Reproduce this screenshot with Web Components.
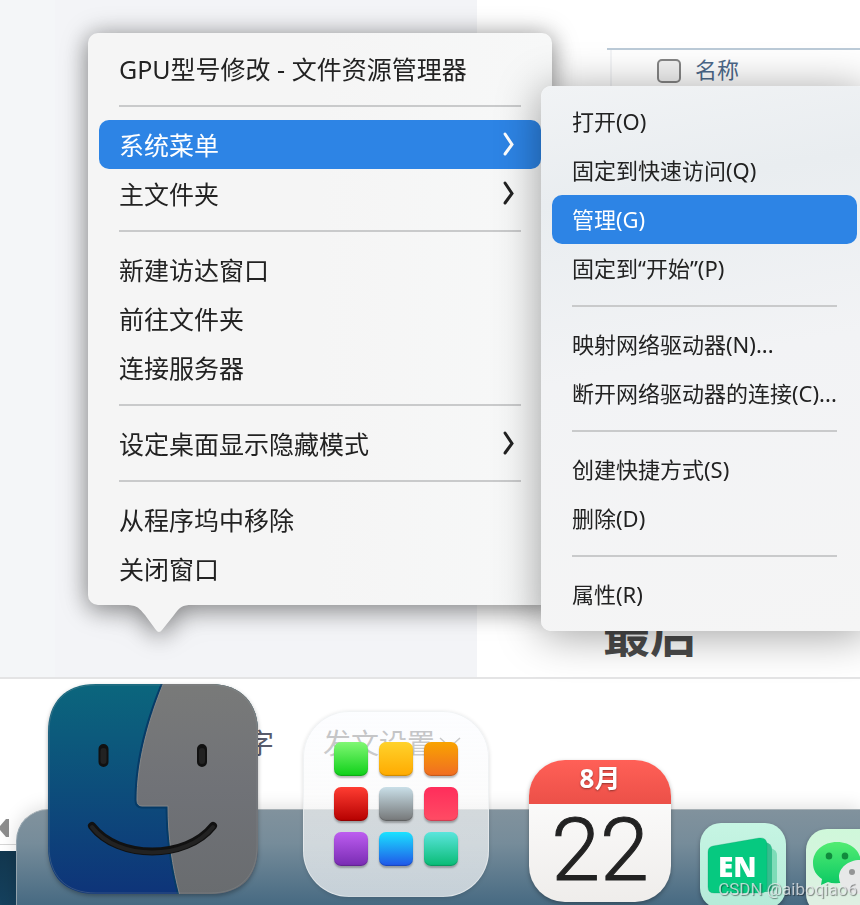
<!DOCTYPE html>
<html lang="zh-CN">
<head>
<meta charset="utf-8">
<title>程序坞菜单</title>
<style>
html,body{margin:0;height:100%;overflow:hidden;background:#fff}
body{font-family:"Noto Sans","Noto Sans CJK SC",sans-serif;color:#222}
</style>
</head>
<body>
<desk-top></desk-top>
<script>
function define(name, html, setup){
  customElements.define(name, class extends HTMLElement{
    connectedCallback(){
      if(this.shadowRoot) return;
      const root=this.attachShadow({mode:'open'});
      const t=document.createElement('template');
      t.innerHTML=html;
      root.append(t.content.cloneNode(true));
      if(setup) setup(this,root);
    }
  });
}

define('menu-row', `
<style>
:host{display:block}
button{all:unset;box-sizing:border-box;display:flex;align-items:center;justify-content:space-between;width:100%;height:49px;padding:0 20px var(--row-bottom,0px);border-radius:10px;white-space:nowrap;cursor:default}
:host([active]) button{background:#2d84e5;color:#fff}
svg{display:none;width:26px;height:26px;margin-bottom:2px}
:host([more]) svg{display:block}
</style>
<button type="button" role="menuitem"><span><slot></slot></span>
<svg viewBox="0 0 26 26" aria-hidden="true"><path d="M10 3L17 13.500L10 23" fill="none" stroke="currentColor" stroke-width="3" stroke-linecap="round"/></svg></button>`);

define('menu-line', `
<style>:host{display:block;height:2px;margin:12px 20px 13px;background:#c9cacb}</style>`);

define('pop-menu', `
<style>
:host{display:block;position:relative;box-sizing:border-box;padding:11px 11px 12px;border-radius:10px;background:var(--menu-bg,#f5f5f5);font-size:var(--menu-size,25px);line-height:32px;color:#222}
svg{display:none;position:absolute;top:100%;left:36px;width:68px;height:28px}
:host([tail]) svg{display:block}
</style>
<div role="menu"><slot></slot></div>
<svg viewBox="0 0 68 28" aria-hidden="true"><path d="M0 0C13 0 14 2 21 10L32 25Q35 29 38 25L50 10C56 2 58 0 68 0Z" fill="#f5f5f5"/></svg>`);

define('file-header', `
<style>
:host{display:block;border-top:2px solid #bccbd8;margin-left:130px}
label{display:flex;align-items:center;gap:14px;height:41px;margin-left:3px;padding-left:45px;border-left:2px solid #f3f4f6;font-size:22px;line-height:28px;color:#4c6889}
input{appearance:none;box-sizing:border-box;width:24px;height:24px;margin:0;border:2px solid #858585;border-radius:5px;background:#f2f2f2}
span{padding-bottom:4px}
</style>
<label><input type="checkbox"><span>名称</span></label>`);

define('editor-bar', `
<style>
:host{display:flex;flex-direction:column;border-top:2px solid #e4e4e5;box-sizing:border-box;background:#fff}
.tools{display:flex;align-items:center;gap:49px;height:125px;padding-left:246px;font-size:28px;color:#585b6b}
button{all:unset;display:flex;align-items:center;gap:4px;color:#989898}
.scroll{display:flex;align-items:center;flex:1;padding-top:8px;border-bottom:1px solid #d6d6d6;margin-bottom:6px}
svg{display:block}
</style>
<div class="tools"><span>字</span><button type="button">发文设置<svg width="22" height="14" viewBox="0 0 22 14"><path d="M1 3L11 12L21 3" fill="none" stroke="currentColor" stroke-width="1.500"/></svg></button></div>
<div class="scroll"><svg width="10" height="18" viewBox="0 0 10 18" aria-hidden="true"><path d="M9 0V18H6L0 11V7L6 0Z" fill="#8d8d8d"/></svg></div>`);

define('dock-icon', `
<style>
:host{display:block;flex:none;position:relative;width:var(--size);height:var(--size);margin-bottom:var(--lift,0px);margin-right:var(--gap,20px)}
:host([solid]){filter:drop-shadow(0 2px 2px rgba(0,0,0,.3))}
::slotted(svg){display:block;width:100%;height:100%}
</style><slot></slot>`);

define('launch-pad', `
<style>
:host{display:grid;box-sizing:border-box;width:100%;height:100%;grid-template-columns:repeat(3,34px);grid-auto-rows:34px;gap:11px;padding:30px;border-radius:46px;border:1px solid rgba(235,238,240,.7);background:linear-gradient(rgba(248,250,255,.4),rgba(250,250,250,.68) 52%,rgba(255,255,255,.68));box-shadow:0 1px 4px rgba(0,0,0,.14)}
i{border-radius:7px;background:linear-gradient(var(--a),var(--b));box-shadow:0 2px 2px rgba(0,0,0,.28),inset 0 -1px 1px rgba(0,0,0,.2)}
</style>`, (el,root)=>{
  [['#80f774','#0ed018'],['#ffd22c','#ffaa00'],['#f9a300','#f06d23'],
   ['#ff3d32','#b50000'],['#c9dfe8','#747677'],['#ff2d5b','#ff4c64'],
   ['#bd5df0','#782bb2'],['#1be2ff','#2055e8'],['#5be5dd','#08bb74']].forEach(([a,b])=>{
    const i=document.createElement('i');
    i.style.setProperty('--a',a); i.style.setProperty('--b',b);
    root.append(i);
  });
});

define('date-tile', `
<style>
:host{display:flex;flex-direction:column;width:100%;height:100%;border-radius:36px;overflow:hidden;background:linear-gradient(#fff,#efedeb);text-align:center}
header{height:44px;line-height:36px;background:linear-gradient(#ff6057,#ec5048);color:#fff;font-size:26px;font-weight:700;text-shadow:0 1px 2px rgba(0,0,0,.4)}
div{flex:1;line-height:92px;font-family:Roboto,"Liberation Sans",sans-serif;font-weight:300;font-size:88px;color:#222;-webkit-text-stroke:1px #222}
</style><header>8月</header><div>22</div>`);

define('dock-bar', `
<style>
:host{display:block}
.shelf{position:absolute;left:16px;right:0;bottom:0;height:96px;box-sizing:border-box;border-top:1px solid #a7b0b5;border-left:1px solid #93a3ad;border-radius:32px 0 0 0;background:linear-gradient(#81929d,#768c9a 35%,#476a82);box-shadow:0 -2px 18px rgba(0,0,0,.13)}
.icons{position:absolute;left:48px;bottom:-10px;display:flex;align-items:flex-end}
.mark{position:absolute;right:3px;bottom:4px;font:17px/24px Roboto,"Liberation Sans",sans-serif;color:rgba(235,238,240,.75);text-shadow:1px 1px 1px rgba(0,0,0,.45)}
</style>
<div class="shelf"></div>
<div class="icons">
<dock-icon solid style="--size:210px;--lift:21px;--gap:45px"><svg viewBox="0 0 210 210" role="img" aria-label="访达">
<defs><linearGradient id="b" x2="0" y2="1"><stop stop-color="#0b667d"/><stop offset=".25" stop-color="#0c5a7c"/><stop offset="1" stop-color="#0e3479"/></linearGradient>
<linearGradient id="g" x2="0" y2="1"><stop stop-color="#797a79"/><stop offset=".5" stop-color="#707277"/><stop offset="1" stop-color="#696c6f"/></linearGradient>
<clipPath id="c"><path id="s" d="M48 0H162C194 0 210 20 210 48V162C210 193 193 210 162 210H48C17 210 0 193 0 162V48C0 18 17 0 48 0Z"/></clipPath></defs>
<g clip-path="url(#c)"><path fill="url(#b)" d="M0 0H210V210H0Z"/>
<path d="M115 -2C98 39 88 80 88 116Q88 123 94 123H119C119 153 123 182 131 212H214V-2Z" fill="url(#g)" stroke="#063b67" stroke-width="3"/>
<path d="M116 -2C99 39 89 80 89 116Q89 122 94 122H120C120 153 124 182 132 212H214V-2Z" fill="url(#g)" stroke="#858687"/></g>
<path d="M48 1H162C193 1 209 20 209 48V162C209 192 192 209 162 209H48C18 209 1 192 1 162V48C1 18 18 1 48 1Z" fill="none" stroke="#8b9499" stroke-opacity=".3"/>
<g fill="none" stroke="#111" stroke-linecap="round"><path stroke-width="10" d="M55.500 65V78M154 65V78"/><path stroke-width="8" d="M44 142C70 176 138 176 165 142"/></g>
<g fill="none" stroke="#222" stroke-linecap="round"><path stroke-width="6" d="M55.500 67V77M154 67V77"/><path stroke-width="4" d="M44 143C70 177 138 177 165 143"/></g></svg></dock-icon>
<dock-icon style="--size:186px;--lift:18px;--gap:40px"><launch-pad></launch-pad></dock-icon>
<dock-icon solid style="--size:142px;--lift:13px;--gap:29px"><date-tile></date-tile></dock-icon>
<dock-icon solid style="--size:86px;--lift:6px"><svg viewBox="0 0 86 86" role="img" aria-label="EN">
<defs><linearGradient id="e" x2="0" y2="1"><stop stop-color="#c6f5e3"/><stop offset="1" stop-color="#b5ead8"/></linearGradient></defs>
<rect width="86" height="86" rx="21" fill="url(#e)"/>
<path d="M60 20L73 26Q77 28 77 32V64Q77 68 72 68H55Z" fill="#7ddcb8"/><path d="M55 16L68 20Q72 22 72 27V65Q72 69 67 69H50Z" fill="#35bd8e"/>
<path d="M13 23L59 15Q67 14 67 22V63Q67 70 61 70H14Q8 70 8 64V29Q8 24 13 23Z" fill="#06c980" stroke="#0b8f60" stroke-opacity=".25"/>
<text x="18" y="54" fill="#fff" font-family="Open Sans, sans-serif" font-weight="800" font-size="28">EN</text></svg></dock-icon>
<dock-icon solid style="--size:86px"><svg viewBox="0 0 86 86" role="img" aria-label="微信">
<defs><linearGradient id="w" x2="0" y2="1"><stop stop-color="#cff8da"/><stop offset="1" stop-color="#e1eee4"/></linearGradient><linearGradient id="x" x2="0" y2="1"><stop stop-color="#52ec72"/><stop offset="1" stop-color="#0bc964"/></linearGradient></defs>
<rect width="86" height="86" rx="21" fill="url(#w)"/>
<path d="M31 13C17 13 7 22 7 34C7 41 10 46 16 50L15 56L22 53Q27 55 33 54C47 54 55 44 55 34C55 22 45 13 31 13Z" fill="url(#x)"/>
<ellipse cx="23" cy="27" rx="3.300" ry="3.500" fill="#108b3d"/><ellipse cx="39" cy="27" rx="3.300" ry="3.500" fill="#108b3d"/>
<path d="M54 31C42 31 33 39 33 48C33 58 42 65 54 65L63 68L62 62C69 59 73 53 73 48C73 38 65 31 54 31Z" fill="#e7e8e8"/><circle cx="46" cy="43" r="3" fill="#939595"/><circle cx="61" cy="43" r="3" fill="#939595"/></svg></dock-icon>
</div>
<div class="mark">CSDN @aiboqiao6</div>`);

define('desk-top', `
<style>
:host{display:grid;position:relative;height:100vh;overflow:hidden;grid-template-rows:1fr 174px 54px;background:radial-gradient(circle at 0 100%,#15415e,#12364d 60px)}
.work{display:grid;grid-template-columns:477px 1fr;min-height:0}
.side{background:linear-gradient(90deg,#f4f6f8 55px,#f3f4f7 55px)}
.page{display:flex;flex-direction:column;justify-content:space-between;background:#fff;padding:48px 0 16px;overflow:hidden}
h1{margin:0 0 0 126px;font-size:47px;line-height:54px;color:#4a4a4a}
.main,.sub{position:absolute}
.main{left:88px;top:33px;width:464px;filter:drop-shadow(0 6px 12px rgba(0,0,0,.3)) drop-shadow(0 0 12px rgba(0,0,0,.24));--menu-bg:linear-gradient(90deg,#f5f5f5 50%,#f7f8f8)}
.sub{left:541px;top:86px;width:max-content;box-shadow:0 4px 44px rgba(0,0,0,.38);--menu-size:22px;--row-bottom:2px;--menu-bg:linear-gradient(170deg,#f1f3f5,#e9edf0 20%,#f2f3f5 50%,#f5f5f5)}
dock-bar{position:absolute;inset:0;pointer-events:none}
</style>
<div class="work"><div class="side"></div><div class="page"><file-header></file-header><h1>最后</h1></div></div>
<editor-bar></editor-bar>
<pop-menu class="main" tail>
<menu-row>GPU型号修改 - 文件资源管理器</menu-row><menu-line></menu-line>
<menu-row active more>系统菜单</menu-row><menu-row more>主文件夹</menu-row><menu-line></menu-line>
<menu-row>新建访达窗口</menu-row><menu-row>前往文件夹</menu-row><menu-row>连接服务器</menu-row><menu-line></menu-line>
<menu-row more>设定桌面显示隐藏模式</menu-row><menu-line></menu-line>
<menu-row>从程序坞中移除</menu-row><menu-row>关闭窗口</menu-row>
</pop-menu>
<pop-menu class="sub">
<menu-row>打开(O)</menu-row><menu-row>固定到快速访问(Q)</menu-row><menu-row active>管理(G)</menu-row><menu-row>固定到“开始”(P)</menu-row><menu-line></menu-line>
<menu-row>映射网络驱动器(N)...</menu-row><menu-row>断开网络驱动器的连接(C)...</menu-row><menu-line></menu-line>
<menu-row>创建快捷方式(S)</menu-row><menu-row>删除(D)</menu-row><menu-line></menu-line>
<menu-row>属性(R)</menu-row>
</pop-menu>
<dock-bar></dock-bar>`);
</script>
</body>
</html>
